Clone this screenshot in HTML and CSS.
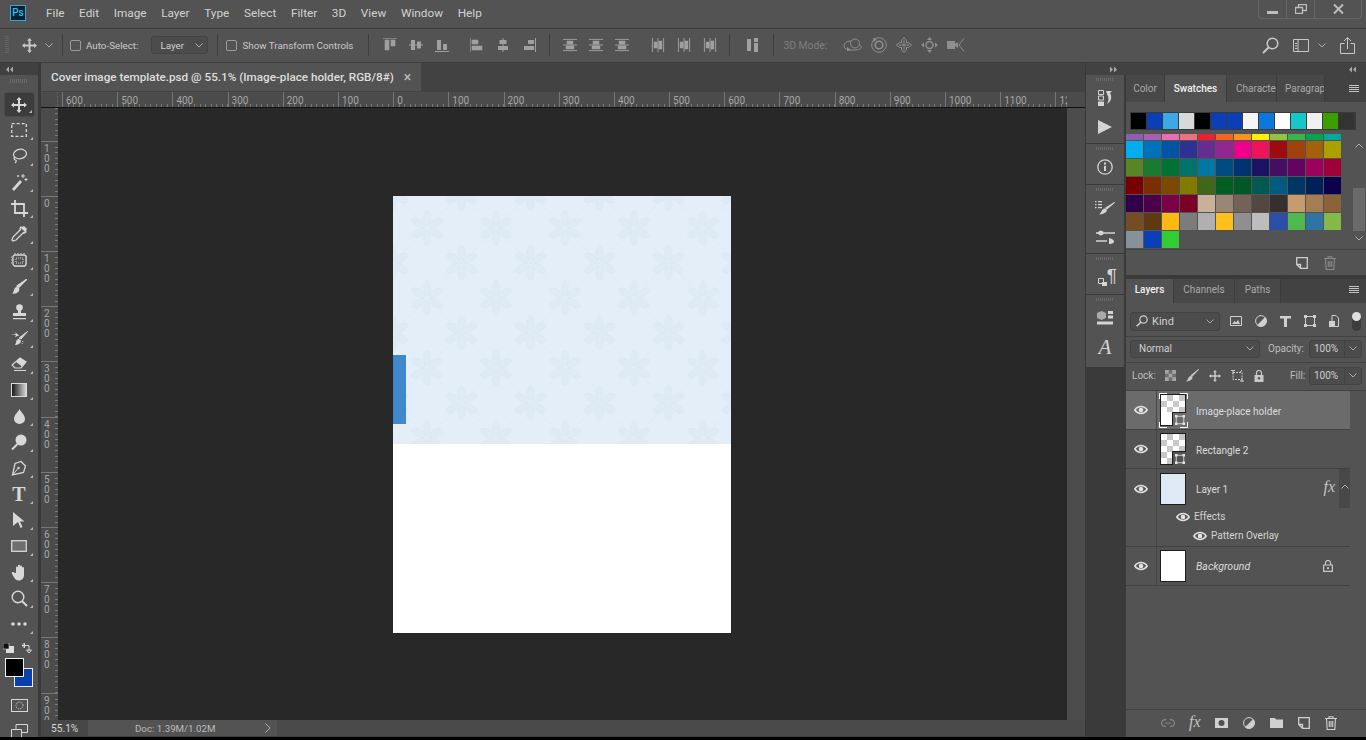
FILE: index.html
```html
<!DOCTYPE html>
<html lang="en">
<head>
    <meta charset="UTF-8">
    <title>Cover image template.psd</title>
    <link rel="stylesheet" href="styles.css">
</head>
<body>
<svg class="defs" width="0" height="0">
    <symbol id="move" viewBox="0 0 16 16"><path d="M8 0l2.600 3H9v4h4V5.400L16 8l-3 2.600V9H9v4h1.600L8 16l-2.600-3H7V9H3v1.600L0 8l3-2.600V7h4V3H5.400z" fill="currentColor"/></symbol>
    <symbol id="eye" viewBox="0 0 14 10"><path d="M.8 5C4 .4 10 .4 13.200 5 10 9.600 4 9.600.8 5z" fill="none" stroke="currentColor" stroke-width="1.500"/><circle cx="7" cy="5" r="2.300" fill="currentColor"/></symbol>
    <symbol id="trash" viewBox="0 0 12 14"><path d="M0 2.500h12M4 2.500V.7h4v1.800M1.500 2.500l.7 11h7.600l.7-11M4.300 5v6M6 5v6M7.700 5v6" fill="none" stroke="currentColor" stroke-width="1.100"/></symbol>
    <symbol id="newlayer" viewBox="0 0 12 12"><path d="M.7.7h10.600v10.600H4.500L.7 7.500zM.7 7.500h3.800v3.800" fill="none" stroke="currentColor" stroke-width="1.300"/></symbol>
    <symbol id="smart" viewBox="0 0 12 12"><path d="M1.500 1.500h9v9h-9z" fill="none" stroke="currentColor"/><path d="M0 0h3v3H0zM9 0h3v3H9zM0 9h3v3H0zM9 9h3v3H9z" fill="currentColor"/></symbol>
    <symbol id="lock" viewBox="0 0 10 12"><path d="M2.500 5V3a2.500 2.500 0 015 0v2" fill="none" stroke="currentColor" stroke-width="1.200"/><path d="M.5 5h9v7h-9z" fill="currentColor"/><circle cx="5" cy="8.300" r="1.200" fill="#535353"/></symbol>
    <symbol id="chev" viewBox="0 0 8 5"><path d="M.5.5L4 4 7.500.5" fill="none" stroke="currentColor"/></symbol>
    <symbol id="burger" viewBox="0 0 10 8"><path d="M0 .5h10M0 2.500h10M0 4.500h10M0 6.500h10" stroke="currentColor"/></symbol>
    <symbol id="grow" viewBox="0 0 7 7"><path d="M0 3.500L3 .5v6zM4 3.500L7 .5v6z" fill="currentColor"/></symbol>
    <symbol id="halfmoon" viewBox="0 0 12 12"><circle cx="6" cy="6" r="5.400" fill="none" stroke="currentColor"/><path d="M2 10.200L10.200 2A5.800 5.800 0 012 10.200z" fill="currentColor"/></symbol>
    <symbol id="aligntop" viewBox="0 0 14 14"><path d="M0 .5h14M2 2h4v10H2zM8 2h4v6H8z" fill="currentColor" stroke="currentColor" stroke-width=".6"/></symbol>
    <symbol id="alignmid" viewBox="0 0 14 14"><path d="M0 7h14" stroke="currentColor"/><path d="M2 2h4v10H2zM8 3.500h4v7H8z" fill="currentColor"/></symbol>
    <symbol id="alignbot" viewBox="0 0 14 14"><path d="M0 13.500h14" stroke="currentColor"/><path d="M2 2h4v10H2zM8 6h4v6H8z" fill="currentColor"/></symbol>
    <symbol id="dist" viewBox="0 0 15 13"><path d="M0 .5h15M0 6.500h15M0 12.500h15" stroke="currentColor"/><path d="M4 2h7v4H4zM3 7h9v4H3z" fill="currentColor"/></symbol>
    <pattern id="flakes" patternUnits="userSpaceOnUse" x="-0.500" y="-3" width="69" height="70">
        <path d="M0 0L69 70M69 0L0 70" stroke="#d5e2ee" stroke-width="1" stroke-dasharray="1.500 2" fill="none"/>
        <g id="flake-a" fill="#deeaf4" stroke="#d4e2ee" stroke-width=".8" stroke-dasharray="1 1">
            <ellipse cx="34.500" cy="25" rx="3.600" ry="7.500"/>
            <ellipse cx="34.500" cy="45" rx="3.600" ry="7.500"/>
            <ellipse cx="26" cy="30" rx="3.600" ry="7.500" transform="rotate(-60 26 30)"/>
            <ellipse cx="43" cy="30" rx="3.600" ry="7.500" transform="rotate(60 43 30)"/>
            <ellipse cx="26" cy="40" rx="3.600" ry="7.500" transform="rotate(60 26 40)"/>
            <ellipse cx="43" cy="40" rx="3.600" ry="7.500" transform="rotate(-60 43 40)"/>
        </g>
        <use href="#flake-a" x="-34.500" y="-35"/>
        <use href="#flake-a" x="34.500" y="-35"/>
        <use href="#flake-a" x="-34.500" y="35"/>
        <use href="#flake-a" x="34.500" y="35"/>
    </pattern>
</svg>

<div class="app">
    <!-- menu bar -->
    <header class="menubar">
        <div class="ps-logo">Ps</div>
        <nav class="menu">
            <span>File</span><span>Edit</span><span>Image</span><span>Layer</span><span>Type</span><span>Select</span><span>Filter</span><span>3D</span><span>View</span><span>Window</span><span>Help</span>
        </nav>
        <div class="winbtns">
            <div class="winbtn"><svg class="win-min" width="11" height="3"><rect width="11" height="3" fill="currentColor"/></svg></div>
            <div class="winbtn"><svg width="12" height="10"><path d="M.5 3.500h7v6h-7zM3.500 3V.5h8v6H8" fill="none" stroke="currentColor" stroke-width="1.300"/></svg></div>
            <div class="winbtn wide"><svg width="11" height="10"><path d="M1 .5l9 9M10 .5l-9 9" stroke="currentColor" stroke-width="2"/></svg></div>
        </div>
    </header>

    <!-- options bar -->
    <div class="options">
        <div class="grip-v"></div>
        <svg class="opt-move"><use href="#move"/></svg>
        <svg class="chev opt-movechev"><use href="#chev"/></svg>
        <i class="sep"></i>
        <label class="check"><i class="box"></i>Auto-Select:</label>
        <div class="select opt-layer">Layer<svg class="chev"><use href="#chev"/></svg></div>
        <i class="sep"></i>
        <label class="check check-wide"><i class="box"></i>Show Transform Controls</label>
        <i class="sep"></i>
        <div class="aligns a1">
            <svg class="al"><use href="#aligntop"/></svg><svg class="al"><use href="#alignmid"/></svg><svg class="al"><use href="#alignbot"/></svg>
        </div>
        <div class="aligns a2">
            <svg class="al rot"><use href="#aligntop"/></svg><svg class="al rot"><use href="#alignmid"/></svg><svg class="al rot"><use href="#alignbot"/></svg>
        </div>
        <i class="sep"></i>
        <div class="aligns a3">
            <svg class="al"><use href="#dist"/></svg><svg class="al"><use href="#dist"/></svg><svg class="al"><use href="#dist"/></svg>
        </div>
        <div class="aligns a4">
            <svg class="al rot"><use href="#dist"/></svg><svg class="al rot"><use href="#dist"/></svg><svg class="al rot"><use href="#dist"/></svg>
        </div>
        <i class="sep"></i>
        <svg class="opt-auto" width="11" height="14"><path d="M0 1h4v12H0zM7 0h4v4H7zM7 5h4v9H7z" fill="currentColor"/></svg>
        <i class="sep"></i>
        <span class="mode3d">3D Mode:</span>
        <div class="icons3d">
            <svg width="19" height="14" viewBox="0 0 19 14"><circle cx="12" cy="5.500" r="4.500" fill="none" stroke="currentColor"/><path d="M8 3C3 3 .5 6 1 8.500s4 3.500 7 3.500c4 0 9 0 10-2s-1-3-2-3.500" fill="none" stroke="currentColor"/><path d="M4 9l4 3-4 1z" fill="currentColor"/></svg>
            <svg width="16" height="16" viewBox="0 0 16 16"><circle cx="8" cy="8" r="7.300" fill="none" stroke="currentColor"/><circle cx="8" cy="8" r="3.800" fill="none" stroke="currentColor" stroke-width="1.600"/><path d="M2 1l4 1-3 3z" fill="currentColor"/></svg>
            <svg width="16" height="16" viewBox="0 0 16 16"><path d="M8 .5l2.500 3v2.300l2-.3 3 2.500-3 2.500-2-.3v2.300l-2.500 3-2.500-3v-2.300l-2 .3-3-2.500 3-2.500 2 .3V3.500z" fill="none" stroke="currentColor"/><path d="M8 3v10M3 8h10" stroke="currentColor"/></svg>
            <svg width="17" height="16" viewBox="0 0 17 16"><circle cx="8.500" cy="8" r="3.500" fill="none" stroke="currentColor" stroke-width="1.500"/><path d="M8.500 0l2.500 3H6zM8.500 16L6 13h5zM0 8l3-2.500v5zM17 8l-3-2.500v5z" fill="currentColor"/></svg>
            <svg width="18" height="14" viewBox="0 0 18 14"><path d="M0 3h8v8H0zM8 6l3-2v6l-3-2z" fill="currentColor"/><path d="M17 .5L12 7l5 6.500" fill="none" stroke="currentColor"/></svg>
        </div>
        <div class="opt-right">
            <svg width="17" height="17" viewBox="0 0 17 17"><circle cx="10.500" cy="6.500" r="5.300" fill="none" stroke="currentColor" stroke-width="1.500"/><path d="M6.500 10.500L1 16" stroke="currentColor" stroke-width="2"/></svg>
            <svg class="opt-ws" width="16" height="13" viewBox="0 0 16 13"><path d="M.5.5h15v12H.5zM5 .5v12" fill="none" stroke="currentColor"/><path d="M2 4h2v1H2zM2 6.500h2v1H2zM2 9h2v1H2z" fill="currentColor"/></svg>
            <svg class="chev opt-wschev"><use href="#chev"/></svg>
            <svg class="opt-share" width="15" height="17" viewBox="0 0 15 17"><path d="M4.500 6.500H.5v10h14v-10h-4M7.500 12V1M4 4l3.500-3.500L11 4" fill="none" stroke="currentColor"/></svg>
        </div>
    </div>

    <div class="workspace">
        <!-- tools -->
        <aside class="toolbar">
            <div class="collapse"><svg width="7" height="7"><use href="#grow"/></svg></div>
            <div class="grip-h"></div>
            <div class="tool active"><svg width="16" height="16"><use href="#move"/></svg></div>
            <div class="tool"><svg width="16" height="14" viewBox="0 0 16 14"><rect x=".7" y=".7" width="14.600" height="12.600" fill="none" stroke="currentColor" stroke-width="1.300" stroke-dasharray="3 2"/></svg></div>
            <div class="tool"><svg width="16" height="16" viewBox="0 0 16 16"><ellipse cx="9" cy="6" rx="6.500" ry="4.700" transform="rotate(-10 9 6)" fill="none" stroke="currentColor" stroke-width="1.200"/><path d="M3.500 9c-1 1.500 0 3 1 3s1 2-.5 3" fill="none" stroke="currentColor" stroke-width="1.200"/></svg></div>
            <div class="tool"><svg width="17" height="17" viewBox="0 0 17 17"><path d="M1 15L9 6l2 2-8 9z" fill="currentColor"/><path d="M12 0v4M10 2h4M15 4v3M13.500 5.500h3M7 1v2M6 2h2" stroke="currentColor"/></svg></div>
            <div class="tool"><svg width="17" height="17" viewBox="0 0 17 17"><path d="M4 0v13h13M0 4h13v13" fill="none" stroke="currentColor" stroke-width="1.800"/></svg></div>
            <div class="tool"><svg width="16" height="16" viewBox="0 0 16 16"><path d="M10 1l5 5-1.500 1-1-.5L5 14l-3 1-1-1 1-3 7.500-7.500-.5-1z" fill="none" stroke="currentColor" stroke-width="1.300"/><path d="M10 1.500l4.500 4.500L16 3l-3-3z" fill="currentColor"/></svg></div>
            <div class="tool"><svg width="17" height="15" viewBox="0 0 17 15"><rect x="2" y="2" width="13" height="11" rx="2" fill="none" stroke="currentColor" stroke-width="1.300"/><path d="M4 0v2M7 0v2M10 0v2M13 0v2M4 13v2M7 13v2M10 13v2M13 13v2M0 4h2M0 7h2M0 10h2M15 4h2M15 7h2M15 10h2M5 5h7v5H5z" stroke="currentColor" fill="none" stroke-dasharray="1 1"/></svg></div>
            <div class="tool"><svg width="15" height="15" viewBox="0 0 15 15"><path d="M14.500.5L7 8 5 7z" fill="currentColor" stroke="currentColor" stroke-linejoin="round" stroke-width="1.400"/><path d="M4.500 8C7 8 8 10 7 12s-4 3-7 2.500C2 14 1.500 9 4.500 8z" fill="currentColor"/></svg></div>
            <div class="tool"><svg width="15" height="16" viewBox="0 0 15 16"><circle cx="7.500" cy="3.500" r="3.300" fill="currentColor"/><path d="M6 6h3v3h5v3H1V9h5zM1 14h13v1.300H1z" fill="currentColor"/></svg></div>
            <div class="tool"><svg width="17" height="15" viewBox="0 0 17 15"><path d="M16.500.5L10 8 8 7z" fill="currentColor" stroke="currentColor" stroke-linejoin="round"/><path d="M7 8c2.500 0 3.500 2 2.500 3.500S6 14.500 3.500 14c2-.5 1-5 3.500-6z" fill="currentColor"/><path d="M0 3h5l-1-2 4 3.500-4 1.500 1-2z" fill="currentColor"/><path d="M12 10l-1 3" stroke="currentColor" stroke-dasharray="1 1"/></svg></div>
            <div class="tool"><svg width="17" height="15" viewBox="0 0 17 15"><path d="M9 1l6 4-5 6H4L1 8z" fill="none" stroke="currentColor" stroke-width="1.200"/><path d="M9 1l6 4-4 4.500L5 5z" fill="currentColor"/><path d="M3 13.500h12" stroke="currentColor"/></svg></div>
            <div class="tool"><svg width="16" height="14"><defs><linearGradient id="grad"><stop offset="0" stop-color="#111"/><stop offset="1" stop-color="#ddd"/></linearGradient></defs><rect x=".5" y=".5" width="15" height="13" fill="url(#grad)" stroke="#ddd"/></svg></div>
            <div class="tool"><svg width="11" height="15" viewBox="0 0 11 15"><path d="M5.500 0C7 3 11 6 11 10a5.500 5 0 01-11 0C0 6 4 3 5.500 0z" fill="currentColor"/></svg></div>
            <div class="tool"><svg width="16" height="16" viewBox="0 0 16 16"><circle cx="10" cy="6" r="5.500" fill="currentColor"/><path d="M6.500 10L1 15.500" stroke="currentColor" stroke-width="2"/></svg></div>
            <div class="tool"><svg width="16" height="16" viewBox="0 0 16 16"><path d="M10 1.500l4.500 4.500-2 6.500L1.500 15 4 3.500z" fill="none" stroke="currentColor" stroke-width="1.300"/><path d="M2 14.500l5-6" stroke="currentColor"/><circle cx="7.500" cy="8" r="1.200" fill="currentColor"/></svg></div>
            <div class="tool tool-text"><span>T</span></div>
            <div class="tool"><svg width="12" height="16" viewBox="0 0 12 16"><path d="M0 0l11.500 9.500H7l2.500 5.500-2 1L5 10l-5 4z" fill="currentColor"/></svg></div>
            <div class="tool"><svg width="16" height="12"><rect x=".7" y=".7" width="14.600" height="10.600" fill="#6e6e6e" stroke="currentColor" stroke-width="1.300"/></svg></div>
            <div class="tool"><svg width="17" height="17" viewBox="0 0 17 17"><path d="M5 9V3.500a1 1 0 012 0V8 1.800a1 1 0 012 0V8 2.500a1 1 0 012 0V8 4a1 1 0 012 0v7c0 3-2 5.500-5 5.500S4 15 2.500 12.500L.8 9.500c-.5-1 1-2 2-1z" fill="currentColor"/></svg></div>
            <div class="tool"><svg width="17" height="17" viewBox="0 0 17 17"><circle cx="7" cy="7" r="5.800" fill="none" stroke="currentColor" stroke-width="1.400"/><path d="M11 11l5 5" stroke="currentColor" stroke-width="2"/></svg></div>
            <div class="tool"><svg width="16" height="4"><circle cx="2" cy="2" r="1.800" fill="currentColor"/><circle cx="8" cy="2" r="1.800" fill="currentColor"/><circle cx="14" cy="2" r="1.800" fill="currentColor"/></svg></div>

            <div class="colors">
                <div class="color-small">
                    <svg width="11" height="10" viewBox="0 0 11 10"><path d="M3 3h8v7H3z" fill="#ddd"/><path d="M0 0h6v6H0z" fill="#111" stroke="#ddd" stroke-width=".6"/></svg>
                    <svg width="10" height="10" viewBox="0 0 10 10"><path d="M0 2.500h7v5M0 2.500L2.500 0v5zM7 10L4.500 7h5z" fill="none" stroke="currentColor"/></svg>
                </div>
                <div class="color-pair"><div class="bgcolor"></div><div class="fgcolor"></div></div>
            </div>
            <div class="tool-sm"><svg width="17" height="13"><rect x=".5" y=".5" width="16" height="12" fill="none" stroke="currentColor"/><circle cx="8.500" cy="6.500" r="3.500" fill="none" stroke="currentColor" stroke-dasharray="1 1"/></svg></div>
            <div class="tool-sm"><svg width="17" height="14" viewBox="0 0 17 14"><path d="M.5 5.500h10v8H.5zM5 5V.5h11.500v8H11" fill="none" stroke="currentColor"/></svg></div>
        </aside>

        <!-- document -->
        <main class="document">
            <div class="tabs">
                <div class="tab">Cover image template.psd @ 55.1% (Image-place holder, RGB/8#)<span class="tab-x">×</span></div>
            </div>
            <div class="ruler-top">
                <div class="corner"></div>
                <div class="hticks">
                    <span>600</span><span>500</span><span>400</span><span>300</span><span>200</span><span>100</span><span>0</span><span>100</span><span>200</span><span>300</span><span>400</span><span>500</span><span>600</span><span>700</span><span>800</span><span>900</span><span>1000</span><span>1100</span><span class="last">12</span>
                </div>
            </div>
            <div class="doc-middle">
                <div class="vticks">
                    <div class="vfirst"></div>
                    <span>100</span><span>0</span><span>100</span><span>200</span><span>300</span><span>400</span><span>500</span><span>600</span><span>700</span><span>800</span><span>900</span>
                </div>
                <div class="canvas">
                    <div class="sheet">
                        <div class="sheet-pattern">
                            <svg width="338" height="248"><rect width="338" height="248" fill="url(#flakes)"/></svg>
                            <div class="blue-bar"></div>
                        </div>
                    </div>
                </div>
                <div class="vscroll"></div>
            </div>
            <div class="status">
                <div class="zoomfield">55.1%</div>
                <div class="docinfo">Doc: 1.39M/1.02M</div>
                <svg class="status-arrow" width="6" height="10"><path d="M.5.5L5 5 .5 9.500" fill="none" stroke="currentColor"/></svg>
                <div class="hscroll"></div>
            </div>
        </main>

        <!-- right dock -->
        <aside class="dock">
            <div class="dock-top">
                <svg class="shrink" width="7" height="7"><use href="#grow"/></svg>
                <svg width="7" height="7"><use href="#grow"/></svg>
            </div>
            <div class="dock-body">
                <div class="strip">
                    <div class="strip-group g1">
                        <div class="grip-h"></div>
                        <div class="strip-ic"><svg width="15" height="16" viewBox="0 0 15 16"><path d="M.5.5h5v4h-5zM.5 6h5v4h-5z" fill="none" stroke="currentColor"/><path d="M0 11.500h6V16H0zM8 1h6l-2 2c2 3 2 8-3 11 2-3 2-7 0-10z" fill="currentColor"/></svg></div>
                        <div class="strip-ic"><svg width="14" height="14"><path d="M0 0l14 7-14 7z" fill="currentColor"/></svg></div>
                    </div>
                    <div class="strip-group g2">
                        <div class="grip-h"></div>
                        <div class="strip-ic"><svg width="16" height="16" viewBox="0 0 16 16"><circle cx="8" cy="8" r="7.200" fill="none" stroke="currentColor" stroke-width="1.300"/><path d="M7 3.500h2v2H7zM7 6.700h2V12H7z" fill="currentColor"/></svg></div>
                    </div>
                    <div class="strip-group g3">
                        <div class="grip-h"></div>
                        <div class="strip-ic"><svg width="20" height="15" viewBox="0 0 20 15"><path d="M0 1h1.500v1.300H0zM3 1h4v1.300H3zM0 4h1.500v1.300H0zM3 4h4v1.300H3zM0 7h1.500v1.300H0zM3 7h4v1.300H3z" fill="currentColor"/><path d="M19.500 2.500L12 9l-1.500-1z" fill="currentColor" stroke="currentColor"/><path d="M9.500 8.500c2 0 3 1.500 2 3s-4 3-7.500 3c2-1 3-6 5.500-6z" fill="currentColor"/></svg></div>
                        <div class="strip-ic"><svg width="19" height="14" viewBox="0 0 19 14"><path d="M0 3h5M8 3h11M0 11h11M15 11h2" stroke="currentColor" stroke-width="1.400"/><path d="M1 3l3-2.500c2 0 4 1 4 2.500s-2 2.500-4 2.500zM13 8c2 .5 5 1.500 5 3.500S15 14 13 14z" fill="currentColor"/></svg></div>
                    </div>
                    <div class="strip-group g4">
                        <div class="grip-h"></div>
                        <div class="strip-ic para"><svg class="para-box" width="10" height="10" viewBox="0 0 10 10"><path d="M.5 2.500h5v5h-5z" fill="none" stroke="currentColor"/><path d="M4 6h5v4H4z" fill="currentColor"/></svg><span>¶</span></div>
                    </div>
                    <div class="strip-group g5">
                        <div class="grip-h"></div>
                        <div class="strip-ic"><svg width="16" height="16" viewBox="0 0 16 16"><path d="M0 3l4.500-2L9 3v5L4.500 10 0 8z" fill="#a9a9a9"/><path d="M11 1h5v3h-5zM11 5.500h5v3h-5zM0 11.500h16v3H0z" fill="currentColor"/></svg></div>
                        <div class="strip-ic char"><span>A</span></div>
                    </div>
                </div>

                <div class="panels">
                    <section class="panel swatches">
                        <div class="ptabs">
                            <div class="ptab w-color">Color</div>
                            <div class="ptab on w-swatch">Swatches</div>
                            <div class="ptab w-char"><span>Character</span></div>
                            <div class="ptab w-para"><span>Paragraph</span></div>
                            <svg class="burger"><use href="#burger"/></svg>
                        </div>
                        <div class="recent">
                            <i style="background:#000"></i><i style="background:#0a3fb8"></i><i style="background:#3da8e6"></i><i style="background:#d9d9d9"></i><i style="background:#000"></i><i style="background:#0a3fb8"></i><i style="background:#0a3fb8"></i><i style="background:#f5f5f5"></i><i style="background:#0a78dc"></i><i style="background:#fff"></i><i style="background:#12c8c8"></i><i style="background:#f0f0f0"></i><i style="background:#3aa000"></i><i style="background:#333"></i>
                        </div>
                        <div class="swatch-wrap">
                            <div class="swatch-grid">
                                <i style="background:#8a5fb0"></i><i style="background:#a85fb0"></i><i style="background:#f06cb0"></i><i style="background:#f07080"></i><i style="background:#ee2030"></i><i style="background:#f26522"></i><i style="background:#f7941d"></i><i style="background:#fff200"></i><i style="background:#8dc63f"></i><i style="background:#39b54a"></i><i style="background:#00a651"></i><i style="background:#00a99d"></i>
                                <i style="background:#00aeef"></i><i style="background:#0072bc"></i><i style="background:#0054a6"></i><i style="background:#2e3192"></i><i style="background:#662d91"></i><i style="background:#92278f"></i><i style="background:#ec008c"></i><i style="background:#ed145b"></i><i style="background:#9e0b0f"></i><i style="background:#a0410d"></i><i style="background:#a36209"></i><i style="background:#aba000"></i>
                                <i style="background:#598527"></i><i style="background:#1a7b30"></i><i style="background:#007236"></i><i style="background:#00746b"></i><i style="background:#0076a3"></i><i style="background:#004b80"></i><i style="background:#003471"></i><i style="background:#1b1464"></i><i style="background:#440e62"></i><i style="background:#630460"></i><i style="background:#9e005d"></i><i style="background:#9e0039"></i>
                                <i style="background:#790000"></i><i style="background:#7b2e00"></i><i style="background:#7d4900"></i><i style="background:#827b00"></i><i style="background:#406618"></i><i style="background:#005e20"></i><i style="background:#005826"></i><i style="background:#005952"></i><i style="background:#005b7f"></i><i style="background:#003663"></i><i style="background:#002157"></i><i style="background:#0d004c"></i>
                                <i style="background:#32004b"></i><i style="background:#4b0049"></i><i style="background:#7b0046"></i><i style="background:#7a0026"></i><i style="background:#c7b299"></i><i style="background:#998675"></i><i style="background:#736357"></i><i style="background:#534741"></i><i style="background:#362f2d"></i><i style="background:#c69c6d"></i><i style="background:#a67c52"></i><i style="background:#8c6239"></i>
                                <i style="background:#754c24"></i><i style="background:#603913"></i><i style="background:#fdb813"></i><i style="background:#7c7c7c"></i><i style="background:#b0b0b0"></i><i style="background:#ffbf1c"></i><i style="background:#8f8f93"></i><i style="background:#bdbdbd"></i><i style="background:#2b4fa8"></i><i style="background:#4fb84f"></i><i style="background:#2e75a6"></i><i style="background:#85b84a"></i>
                                <i style="background:#87919a"></i><i style="background:#0a3fb8"></i><i style="background:#33cc33"></i>
                            </div>
                            <div class="swatch-scroll">
                                <svg class="chev up"><use href="#chev"/></svg>
                                <div class="sw-thumb"></div>
                                <svg class="chev"><use href="#chev"/></svg>
                            </div>
                        </div>
                        <div class="pfoot sw-foot">
                            <svg width="12" height="12"><use href="#newlayer"/></svg>
                            <svg class="dim" width="12" height="14"><use href="#trash"/></svg>
                        </div>
                    </section>

                    <section class="panel layers">
                        <div class="ptabs">
                            <div class="ptab on w-layers">Layers</div>
                            <div class="ptab w-chan">Channels</div>
                            <div class="ptab w-paths">Paths</div>
                            <svg class="burger"><use href="#burger"/></svg>
                        </div>
                        <div class="lrow filter">
                            <div class="select sel-kind"><svg width="12" height="12" viewBox="0 0 12 12"><circle cx="7.500" cy="4.500" r="3.700" fill="none" stroke="currentColor" stroke-width="1.200"/><path d="M5 7L.7 11.300" stroke="currentColor" stroke-width="1.500"/></svg><span>Kind</span><svg class="chev"><use href="#chev"/></svg></div>
                            <svg class="fi" width="12" height="10" viewBox="0 0 12 10"><path d="M.5.5h11v9H.5z" fill="none" stroke="currentColor"/><path d="M2 8l2.500-3 1.500 1.500L8 4l2 4z" fill="currentColor"/></svg>
                            <svg class="fi" width="12" height="12"><use href="#halfmoon"/></svg>
                            <svg class="fi" width="11" height="11" viewBox="0 0 11 11"><path d="M0 0h11v2.500H7V11H4V2.500H0z" fill="currentColor"/></svg>
                            <svg class="fi" width="12" height="12"><use href="#smart"/></svg>
                            <svg class="fi" width="10" height="12" viewBox="0 0 10 12"><path d="M3 .5h4l2.500 2.500v8.500H3z" fill="none" stroke="currentColor"/><path d="M0 6h6v6H0z" fill="currentColor"/></svg>
                            <div class="toggle"></div>
                        </div>
                        <div class="lrow blend">
                            <div class="select sel-blend">Normal<svg class="chev"><use href="#chev"/></svg></div>
                            <span class="lab lab-op">Opacity:</span>
                            <div class="numfield">100%<i><svg class="chev"><use href="#chev"/></svg></i></div>
                        </div>
                        <div class="lrow lockrow">
                            <span class="lab lab-lock">Lock:</span>
                            <svg class="lk" width="11" height="11" viewBox="0 0 11 11"><path d="M0 0h11v11H0z" fill="#6f6f6f"/><path d="M0 0h3.700v3.700H0zM7.300 0H11v3.700H7.300zM3.700 3.700h3.600v3.600H3.700zM0 7.300h3.700V11H0zM7.300 7.300H11V11H7.300z" fill="#a5a5a5"/></svg>
                            <svg class="lk dimmer" width="13" height="13" viewBox="0 0 13 13"><path d="M12.500.5L6 7.500 5 6.500z" fill="currentColor" stroke="currentColor"/><path d="M4.500 7C6.500 7 7 8.500 6 10s-3.500 2.500-6 2.500c2-1 2-5 4.500-5.500z" fill="currentColor"/></svg>
                            <svg class="lk" width="12" height="12"><use href="#move"/></svg>
                            <svg class="lk" width="13" height="12" viewBox="0 0 13 12"><path d="M2 2.500h9v7H2z" fill="none" stroke="currentColor" stroke-dasharray="2 1"/><path d="M4 .5h-4M2 0v4M9 2.500l2-2.500M11 8v4M9 11h4" stroke="currentColor"/></svg>
                            <svg class="lk" width="10" height="12"><use href="#lock"/></svg>
                            <span class="lab lab-fill">Fill:</span>
                            <div class="numfield">100%<i><svg class="chev"><use href="#chev"/></svg></i></div>
                        </div>

                        <div class="layerlist">
                            <div class="layer selected">
                                <div class="eyecol"><svg class="eye"><use href="#eye"/></svg></div>
                                <div class="thumb checker sel-thumb">
                                    <svg class="brackets" width="29" height="35" viewBox="0 0 29 35"><path d="M.5 6V.5H8M21 .5h7.500V6M.5 29v5.500H8M21 34.500h7.500V29" fill="none" stroke="#fff"/></svg>
                                    <i class="mask-white"></i>
                                    <div class="notch"><svg width="10" height="10"><use href="#smart"/></svg></div>
                                </div>
                                <div class="lname">Image-place holder</div>
                            </div>
                            <div class="layer">
                                <div class="eyecol"><svg class="eye"><use href="#eye"/></svg></div>
                                <div class="thumb checker">
                                    <div class="notch"><svg width="10" height="10"><use href="#smart"/></svg></div>
                                </div>
                                <div class="lname">Rectangle 2</div>
                            </div>
                            <div class="layer layer-fx">
                                <div class="eyecol"><svg class="eye"><use href="#eye"/></svg></div>
                                <div class="thumb tint"></div>
                                <div class="lname">Layer 1</div>
                                <span class="fx">fx</span>
                                <div class="fxarrow"><svg class="chev up"><use href="#chev"/></svg></div>
                            </div>
                            <div class="effects">
                                <div class="eyecol"></div>
                                <div class="fxrows">
                                    <div class="fxrow"><svg class="eye"><use href="#eye"/></svg>Effects</div>
                                    <div class="fxrow sub"><svg class="eye"><use href="#eye"/></svg>Pattern Overlay</div>
                                </div>
                            </div>
                            <div class="layer">
                                <div class="eyecol"><svg class="eye"><use href="#eye"/></svg></div>
                                <div class="thumb blank"></div>
                                <div class="lname ital">Background</div>
                                <svg class="bg-lock" width="10" height="12" viewBox="0 0 10 12"><path d="M2.500 5V3a2.500 2.500 0 015 0v2M.6 5h8.800v6.400H.6z" fill="none" stroke="currentColor" stroke-width="1.200"/><circle cx="5" cy="8.200" r="1.100" fill="currentColor"/></svg>
                            </div>
                        </div>

                        <div class="pfoot layer-foot">
                            <svg class="dim" width="14" height="8" viewBox="0 0 14 8"><path d="M5 .6H4a3.400 3.400 0 000 6.800h1M9 .6h1a3.400 3.400 0 010 6.800H9M4 4h6" fill="none" stroke="currentColor" stroke-width="1.100"/></svg>
                            <span class="fx fx-foot">fx</span>
                            <svg width="13" height="10" viewBox="0 0 13 10"><path d="M0 0h13v10H0z" fill="currentColor"/><circle cx="6.500" cy="5" r="3" fill="#505050"/></svg>
                            <svg width="12" height="12"><use href="#halfmoon"/></svg>
                            <svg width="13" height="10" viewBox="0 0 13 10"><path d="M0 0h5l1 1.500h7V10H0z" fill="currentColor"/></svg>
                            <svg width="12" height="12"><use href="#newlayer"/></svg>
                            <svg width="12" height="14"><use href="#trash"/></svg>
                        </div>
                    </section>
                </div>
            </div>
        </aside>
    </div>
    <div class="bottom-edge"></div>
</div>
</body>
</html>
```

FILE: styles.css
```css
html, body {
    margin: 0;
    height: 100%;
    overflow: hidden;
    background: #000;
}
body {
    font-family: Roboto, "Noto Sans", sans-serif;
    font-size: 10px;
    color: #cfcfcf;
}
.defs {
    position: absolute;
}
.app {
    width: 1366px;
    height: 740px;
    display: flex;
    flex-direction: column;
    background: #535353;
}

/* menu bar */
.menubar {
    height: 28px;
    display: flex;
    align-items: flex-start;
    flex: none;
}
.ps-logo {
    width: 14px;
    height: 14px;
    margin: 5px 0 0 10px;
    border: 1px solid #31a8e0;
    background: #04222f;
    color: #31c0f0;
    font-size: 10px;
    line-height: 14px;
    text-align: center;
    font-weight: 500;
}
.menu {
    display: flex;
    gap: 14.600px;
    margin-left: 20px;
    font-size: 11.800px;
    line-height: 26px;
    color: #d2d2d2;
}
.winbtns {
    margin-left: auto;
    margin-right: 4px;
    display: flex;
    height: 18px;
    border: 1px solid #666;
    border-top: none;
    border-radius: 0 0 4px 4px;
    color: #bdbdbd;
}
.winbtn {
    width: 27px;
    display: flex;
    align-items: center;
    justify-content: center;
    border-left: 1px solid #666;
}
.winbtn:first-child {
    border-left: none;
}
.winbtn.wide {
    width: 46px;
}
.win-min {
    margin-top: 6px;
}

/* options bar */
.options {
    height: 32px;
    padding-bottom: 1px;
    flex: none;
    display: flex;
    align-items: center;
    border-top: 1px solid #3c3c3c;
    border-bottom: 1px solid #3c3c3c;
    color: #c8c8c8;
    font-size: 9.800px;
}
.grip-v {
    width: 4px;
    height: 18px;
    margin-left: 5px;
    background: repeating-linear-gradient(#636363 0 1px, transparent 1px 2px);
}
.opt-move {
    width: 15px;
    height: 15px;
    margin-left: 13px;
}
.chev {
    width: 8px;
    height: 5px;
    color: #aaa;
}
.opt-movechev {
    margin-left: 8px;
}
.sep {
    width: 1px;
    height: 22px;
    background: #3f3f3f;
    margin: 0 9px;
}
.check {
    display: flex;
    align-items: center;
    gap: 5px;
    margin-left: -2px;
    white-space: nowrap;
}
.check-wide {
    width: 127px;
    margin-left: -1px;
    margin-right: 6px;
}
.box {
    width: 9px;
    height: 9px;
    border: 1px solid #9a9a9a;
    border-radius: 2px;
    flex: none;
}
.select {
    display: flex;
    align-items: center;
    justify-content: space-between;
    box-sizing: border-box;
    height: 18px;
    border: 1px solid #434343;
    border-radius: 3px;
    background: #4c4c4c;
    color: #d0d0d0;
}
.opt-layer {
    width: 57px;
    padding: 0 4px 0 8px;
    margin-left: 13px;
}
.aligns {
    display: flex;
    color: #a0a0a0;
}
.al {
    width: 14px;
    height: 14px;
    margin-right: 12px;
}
.al.rot {
    transform: rotate(-90deg);
}
.a1 { margin-left: 5px; }
.a2 { margin-left: 9px; }
.a2 .al:last-child { margin-right: 4px; }
.a3 { margin-left: 4px; }
.a4 { margin-left: 10px; }
.a4 .al:last-child { margin-right: 3px; }
.opt-auto {
    color: #a0a0a0;
    margin: 0 6px 0 8px;
}
.mode3d {
    color: #7f7f7f;
    width: 44px;
    white-space: nowrap;
    font-size: 10.300px;
}
.icons3d {
    display: flex;
    align-items: center;
    gap: 9px;
    margin-left: 16px;
    color: #8f8f8f;
}
.opt-right {
    margin-left: auto;
    margin-right: 11px;
    display: flex;
    align-items: center;
    color: #c8c8c8;
}
.opt-ws { margin-left: 14px; }
.opt-wschev { margin-left: 9px; }
.opt-share { margin-left: 14px; }

/* work area */
.workspace {
    flex: 1;
    display: flex;
    min-height: 0;
    overflow: hidden;
}
.toolbar {
    width: 38px;
    flex: none;
    border-right: 3px solid #3a3a3a;
    display: flex;
    flex-direction: column;
    align-items: center;
    color: #d8d8d8;
}
.collapse {
    align-self: stretch;
    height: 12px;
    flex: none;
    background: #404040;
    display: flex;
    align-items: center;
    padding-left: 6px;
    color: #a8a8a8;
}
.grip-h {
    width: 18px;
    height: 4px;
    flex: none;
    margin: 4px auto 0;
    background: repeating-linear-gradient(90deg, #6a6a6a 0 1px, transparent 1px 2px);
}
.toolbar > .grip-h {
    margin: 4px auto 8px;
}
.tool {
    width: 31px;
    height: 26px;
    flex: none;
    display: flex;
    align-items: center;
    justify-content: center;
    position: relative;
    box-sizing: border-box;
}
.tool::after {
    content: "";
    position: absolute;
    right: 2px;
    bottom: 3px;
    border-left: 3px solid transparent;
    border-bottom: 3px solid #b8b8b8;
}
.tool.active {
    height: 25px;
    margin-top: 1px;
    background: #3c3c3c;
    border-radius: 3px;
    border: 1px solid #4a4a4a;
}
.tool-text span {
    font-family: "Liberation Serif", serif;
    font-weight: 700;
    font-size: 20px;
    line-height: 20px;
}
.colors {
    align-self: stretch;
    margin-top: 5px;
    flex: none;
}
.color-small {
    display: flex;
    justify-content: space-between;
    padding: 0 6px 0 3px;
    align-items: center;
    height: 12px;
}
.color-pair {
    position: relative;
    height: 29px;
    margin-top: 4px;
}
.fgcolor, .bgcolor {
    position: absolute;
    box-sizing: border-box;
    width: 19px;
    height: 19px;
    border: 1px solid #eee;
}
.fgcolor {
    left: 5px;
    top: 0;
    background: #000;
}
.bgcolor {
    left: 14px;
    top: 10px;
    background: #0a3fb0;
}
.tool-sm {
    flex: none;
    height: 26px;
    display: flex;
    align-items: center;
    justify-content: center;
}
.colors + .tool-sm {
    margin-top: 5px;
}

/* document */
.document {
    width: 1044px;
    flex: none;
    display: flex;
    flex-direction: column;
    border-right: 1px solid #383838;
}
.tabs {
    height: 29px;
    flex: none;
    background: #424242;
}
.tab {
    width: 380px;
    height: 28px;
    box-sizing: border-box;
    background: #535353;
    padding-left: 10px;
    font-size: 11.700px;
    font-weight: 500;
    line-height: 28px;
    color: #dedede;
    white-space: nowrap;
    display: flex;
}
.tab-x {
    margin-left: 10px;
    color: #b8b8b8;
    font-size: 14px;
}
.ruler-top {
    height: 15px;
    flex: none;
    display: flex;
    background: #4b4b4b;
    border-bottom: 1px solid #111;
}
.corner {
    width: 17px;
    flex: none;
    border-right: 1px dotted #6a6a6a;
    box-sizing: border-box;
}
.hticks {
    display: flex;
    flex: 1;
    padding-left: 4px;
    overflow: hidden;
}
.hticks span {
    width: 55.200px;
    flex: none;
    box-sizing: border-box;
    border-left: 1px solid #777;
    padding-left: 3px;
    font-size: 10px;
    line-height: 17px;
    color: #a6a6a6;
    background: repeating-linear-gradient(90deg, transparent 0 4.520px, #777 4.520px 5.520px) 0 100% / 100% 3px no-repeat;
}
.hticks .last {
    width: 12px;
    overflow: hidden;
}
.doc-middle {
    flex: 1;
    display: flex;
    min-height: 0;
}
.vticks {
    width: 17px;
    flex: none;
    background: #4b4b4b;
    display: flex;
    flex-direction: column;
    overflow: hidden;
}
.vfirst {
    height: 32.700px;
    flex: none;
    background: repeating-linear-gradient(0deg, transparent 0 4.520px, #777 4.520px 5.520px) 100% 0 / 3px 100% no-repeat;
}
.vticks span {
    height: 55.200px;
    flex: none;
    box-sizing: border-box;
    border-top: 1px solid #777;
    padding: 2px 7px 0 3px;
    width: 100%;
    font-size: 10px;
    line-height: 10px;
    color: #a6a6a6;
    word-break: break-all;
    background: repeating-linear-gradient(180deg, transparent 0 4.520px, #777 4.520px 5.520px) 100% 0 / 3px 100% no-repeat;
}
.canvas {
    flex: 1;
    background: #282828;
    padding: 88px 0 0 335px;
    box-sizing: border-box;
}
.sheet {
    width: 338px;
    height: 437px;
    background: #fff;
}
.sheet-pattern {
    height: 248px;
    background: #e3eef8;
    position: relative;
}
.sheet-pattern svg {
    display: block;
}
.blue-bar {
    position: absolute;
    left: 0;
    top: 159px;
    width: 13px;
    height: 69px;
    background: #3f88cc;
}
.vscroll {
    width: 18px;
    flex: none;
    background: #4c4c4c;
}
.status {
    height: 16px;
    flex: none;
    display: flex;
    align-items: center;
    color: #bcbcbc;
    font-size: 9.700px;
    border-bottom: 1px solid #3e3e3e;
}
.zoomfield {
    width: 47px;
    height: 100%;
    box-sizing: border-box;
    padding-left: 10px;
    background: #474747;
    line-height: 17px;
    color: #d6d6d6;
    font-size: 10.200px;
}
.docinfo {
    margin-left: 47px;
    width: 130px;
    padding-top: 1px;
}
.status-arrow {
    color: #aaa;
}
.hscroll {
    margin-left: 6px;
    flex: 1;
    height: 100%;
    background: #4a4a4a;
}

/* right dock */
.dock {
    flex: 1;
    display: flex;
    flex-direction: column;
    min-width: 0;
    background: #3a3a3a;
}
.dock-top {
    height: 12px;
    flex: none;
    background: #424242;
    display: flex;
    align-items: center;
    color: #a8a8a8;
    padding-left: 24px;
    gap: 232px;
}
.shrink {
    transform: rotate(180deg);
}
.dock-body {
    flex: 1;
    display: flex;
    min-height: 0;
}
.strip {
    width: 38px;
    flex: none;
    margin-right: 2px;
    color: #d4d4d4;
    display: flex;
    flex-direction: column;
}
.strip-group {
    background: #535353;
    margin-bottom: 1px;
    flex: none;
    box-sizing: border-box;
    display: flex;
    flex-direction: column;
    align-items: center;
}
.strip-ic {
    height: 29px;
    display: flex;
    align-items: center;
    justify-content: center;
    position: relative;
    flex: none;
}
.g1 { height: 68px; }
.g2 { height: 40px; }
.g3 { height: 68px; }
.g4 { height: 40px; }
.g5 { height: 72px; }
.strip-group > .grip-h {
    margin: 3px auto 2px;
    height: 3px;
}
.g1 .strip-ic:first-of-type { height: 30px; }
.g2 .strip-ic { height: 30px; }
.g4 .strip-ic { height: 28px; }
.para {
    width: 24px;
    font-family: "Liberation Sans", sans-serif;
    font-size: 19px;
    justify-content: flex-end;
}
.para-box {
    margin-right: -1px;
    align-self: flex-end;
    margin-bottom: 4px;
}
.char span {
    font-family: "Liberation Serif", serif;
    font-style: italic;
    font-size: 21px;
    line-height: 22px;
}
.panels {
    flex: 1;
    min-width: 0;
    display: flex;
    flex-direction: column;
}
.panel {
    background: #535353;
    display: flex;
    flex-direction: column;
}
.swatches {
    height: 200px;
    margin-bottom: 4px;
    flex: none;
}
.layers {
    flex: 1;
    min-height: 0;
}
.ptabs {
    height: 27px;
    flex: none;
    background: #424242;
    display: flex;
    align-items: stretch;
    position: relative;
    font-size: 10px;
    color: #a8a8a8;
}
.layers .ptabs {
    height: 24px;
}
.layers .ptab {
    padding-bottom: 3px;
}
.ptab {
    display: flex;
    align-items: center;
    justify-content: center;
    box-sizing: border-box;
    background: #484848;
    border-right: 1px solid #3c3c3c;
    overflow: hidden;
    white-space: nowrap;
}
.ptab.on {
    background: #535353;
    color: #f0f0f0;
    font-weight: 500;
}
.ptab span {
    display: block;
    width: 100%;
    padding-left: 9px;
    box-sizing: border-box;
    overflow: hidden;
}
.w-color { width: 39px; }
.w-swatch { width: 62px; }
.w-char { width: 50px; }
.w-para { width: 48px; }
.w-para span { padding-left: 8px; }
.w-layers { width: 48px; }
.w-chan { width: 61px; }
.w-paths { width: 46px; }
.burger {
    position: absolute;
    right: 7px;
    top: 10px;
    width: 10px;
    height: 8px;
    color: #c4c4c4;
}
.layers .burger {
    top: 7px;
}
.recent {
    display: flex;
    height: 18px;
    margin: 10px 10px 4px 4px;
    padding-left: 1px;
    background: #3a3a3a;
    align-items: center;
}
.recent i {
    width: 15px;
    height: 16px;
    margin-right: 1px;
    flex: none;
}
.swatch-wrap {
    flex: 1;
    display: flex;
    overflow: hidden;
    min-height: 0;
}
.swatch-grid {
    width: 216px;
    flex: none;
    display: grid;
    grid-template-columns: repeat(12, 17px);
    grid-auto-rows: 17px;
    gap: 1px;
    margin-top: -11px;
    align-content: start;
}
.swatch-scroll {
    flex: 1;
    display: flex;
    flex-direction: column;
    align-items: center;
    padding-left: 9px;
    position: relative;
    box-sizing: border-box;
}
.chev.up {
    transform: rotate(180deg);
}
.swatch-scroll .up {
    margin-top: 9px;
}
.sw-thumb {
    width: 12px;
    height: 43px;
    background: #6a6a6a;
    margin: 40px 0 5px;
}
.pfoot {
    flex: none;
    display: flex;
    align-items: center;
    border-top: 1px solid #424242;
    box-sizing: border-box;
}
.sw-foot {
    height: 26px;
    padding-left: 170px;
    gap: 16px;
    color: #cfcfcf;
}
.dim {
    color: #8a8a8a;
}
.lrow {
    display: flex;
    align-items: center;
    flex: none;
    box-sizing: border-box;
    padding-left: 4px;
    border-bottom: 1px solid #424242;
}
.filter {
    height: 34px;
    padding-top: 3px;
    color: #d0d0d0;
}
.sel-kind {
    width: 90px;
    height: 19px;
    padding: 0 5px;
    margin-right: 10px;
    justify-content: flex-start;
    gap: 4px;
    font-size: 11px;
}
.sel-kind .chev {
    margin-left: auto;
}
.fi {
    margin-right: 13px;
}
.toggle {
    width: 9px;
    height: 19px;
    border-radius: 5px;
    background: #3c3c3c;
    position: relative;
}
.toggle::before {
    content: "";
    position: absolute;
    left: 0;
    top: 0;
    width: 9px;
    height: 9px;
    border-radius: 50%;
    background: #e0e0e0;
}
.blend {
    height: 26px;
    padding-bottom: 2px;
}
.sel-blend {
    width: 130px;
    padding: 0 5px 0 8px;
}
.lab {
    color: #bdbdbd;
    white-space: nowrap;
}
.lab-op {
    margin: 0 4px 0 8px;
    width: 37px;
}
.numfield {
    width: 53px;
    height: 18px;
    box-sizing: border-box;
    display: flex;
    align-items: center;
    border: 1px solid #434343;
    border-radius: 3px;
    background: #4c4c4c;
    padding-left: 4px;
    color: #d0d0d0;
}
.numfield i {
    margin-left: auto;
    width: 16px;
    height: 100%;
    border-left: 1px solid #434343;
    display: flex;
    align-items: center;
    justify-content: center;
}
.lockrow {
    height: 28px;
    padding: 0 0 2px 6px;
    color: #c8c8c8;
}
.lab-lock {
    width: 24px;
    margin-right: -1px;
}
.lk {
    margin-left: 10px;
    flex: none;
}
.lab-fill {
    margin-left: 26px;
    margin-right: 4px;
    width: 15px;
}
.layerlist {
    flex: 1;
    width: 224px;
    min-height: 0;
}
.layer {
    height: 39px;
    display: flex;
    align-items: center;
    box-sizing: border-box;
    border-bottom: 1px solid #424242;
    position: relative;
}
.layer.selected {
    background: #6b6b6b;
}
.eyecol {
    width: 31px;
    height: 100%;
    flex: none;
    box-sizing: border-box;
    border-right: 1px solid #454545;
    display: flex;
    align-items: center;
    justify-content: center;
}
.eye {
    width: 14px;
    height: 10px;
    color: #e2e2e2;
}
.thumb {
    width: 26px;
    height: 32px;
    box-sizing: border-box;
    border: 1px solid #1e1e1e;
    margin-left: 3px;
    position: relative;
    flex: none;
}
.checker {
    background: repeating-conic-gradient(#c8c8c8 0 25%, #fff 0 50%) 0 0 / 12px 12px;
}
.tint { background: #dfe9f5; }
.blank { background: #fff; }
.notch {
    position: absolute;
    right: -1px;
    bottom: -1px;
    width: 14px;
    height: 14px;
    background: #535353;
    border-left: 1px solid #1e1e1e;
    border-top: 1px solid #1e1e1e;
    box-sizing: border-box;
    display: flex;
    align-items: center;
    justify-content: center;
    color: #e4e4e4;
}
.selected .notch {
    background: #6b6b6b;
}
.brackets {
    position: absolute;
    left: -2px;
    top: -2px;
}
.mask-white {
    position: absolute;
    left: 0;
    bottom: 0;
    width: 11px;
    height: 13px;
    background: #fff;
}
.lname {
    margin: 2px 0 0 10px;
    color: #dcdcdc;
    white-space: nowrap;
}
.lname.ital {
    font-style: italic;
    font-size: 10.500px;
    margin-top: 0;
}
.layer-fx {
    border-bottom: none;
}
.fx {
    font-family: "Liberation Serif", serif;
    font-style: italic;
    font-size: 16px;
    color: #c4c4c4;
}
.layer-fx .fx {
    position: absolute;
    right: 15px;
    top: 9px;
}
.fxarrow {
    position: absolute;
    right: 0;
    top: 0;
    width: 11px;
    height: 39px;
    background: #484848;
    display: flex;
    justify-content: center;
    padding-top: 15px;
    box-sizing: border-box;
}
.effects {
    height: 39px;
    display: flex;
    border-bottom: 1px solid #424242;
    box-sizing: border-box;
}
.fxrows {
    flex: 1;
    margin-top: -1px;
}
.fxrow {
    height: 19px;
    display: flex;
    align-items: center;
    gap: 4px;
    padding-left: 19px;
    color: #d4d4d4;
}
.fxrow.sub {
    padding-left: 36px;
}
.bg-lock {
    position: absolute;
    right: 17px;
    top: 13px;
    color: #c8c8c8;
}
.layer-foot {
    height: 26px;
    margin-bottom: 2px;
    padding-left: 35px;
    gap: 15px;
    color: #d0d0d0;
}
.fx-foot {
    margin: -2px -1px 0;
}
.bottom-edge {
    height: 3px;
    flex: none;
    background: #000;
}
```
